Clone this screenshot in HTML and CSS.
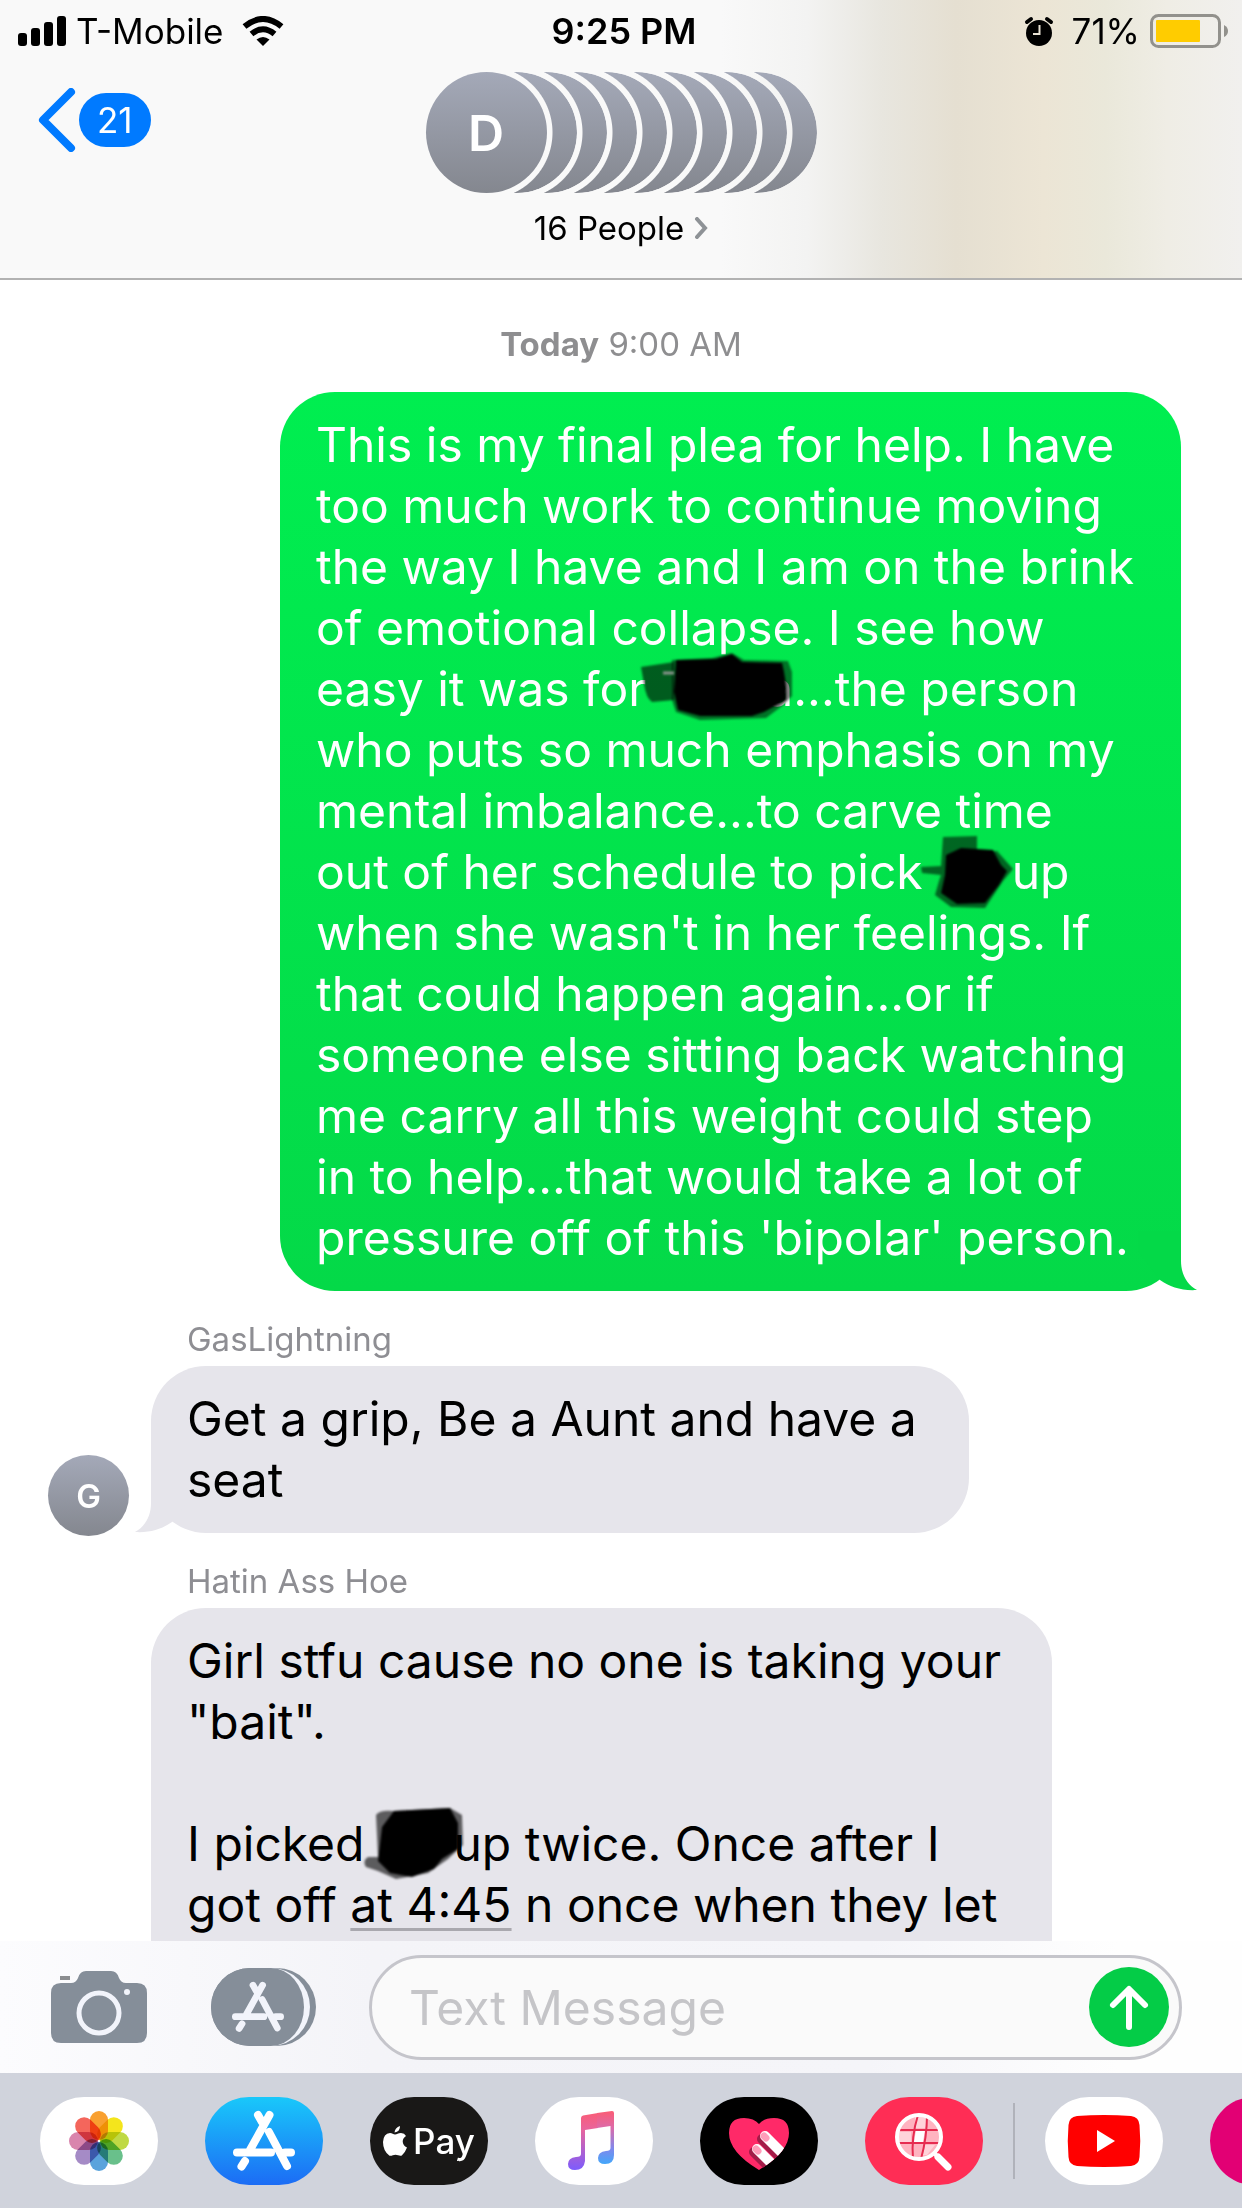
FILE: index.html
```html
<!DOCTYPE html>
<html lang="en">
<head>
    <meta charset="UTF-8">
    <meta name="viewport" content="width=device-width, initial-scale=1.0">
    <title>Messages</title>
    <link rel="stylesheet" href="styles.css">
</head>
<body>

    <!-- Shared shapes -->
    <svg class="defs" aria-hidden="true">
        <symbol id="store-mark" viewBox="28 12 64 62">
            <g fill="none" stroke="currentColor" stroke-width="8" stroke-linecap="round">
                <path d="M65.500 17L46 52M54 17L58 24M33 54.500H67M81 54.500H87M41 63L37.500 68.500M65 34L83 68"/>
            </g>
        </symbol>
        <symbol id="tail" viewBox="0 0 60 60">
            <path d="M17 0V30C17 42 12 53 1 59C16 60 28 56 38 49L60 20V0Z" fill="currentColor"/>
        </symbol>
    </svg>

    <!-- Header -->
    <header class="header">
        <div class="status">
            <div class="status-left">
                <svg class="signal" viewBox="0 0 48 30" aria-hidden="true">
                    <rect x="0" y="17" width="9" height="13" rx="3"/>
                    <rect x="13" y="12" width="9" height="18" rx="3"/>
                    <rect x="26" y="6" width="9" height="24" rx="3"/>
                    <rect x="39" y="0" width="9" height="30" rx="3"/>
                </svg>
                <span>T-Mobile</span>
                <svg class="wifi" viewBox="0 0 42 30" aria-hidden="true">
                    <path d="M21 30L14.500 23.500Q21 18.500 27.500 23.500Z"/>
                    <path d="M9.500 18Q21 8.500 32.500 18M2.500 10.500Q21 -4.500 39.500 10.500" fill="none" stroke="#000" stroke-width="6"/>
                </svg>
            </div>
            <strong class="clock">9:25 PM</strong>
            <div class="status-right">
                <svg class="alarm" viewBox="0 0 30 30" aria-hidden="true">
                    <circle cx="15" cy="17" r="13"/>
                    <path d="M3 6L7 3M27 6L23 3" stroke="#000" stroke-width="4" stroke-linecap="round"/>
                    <path d="M15.500 9V18H9" fill="none" stroke="#e8e2d4" stroke-width="2"/>
                </svg>
                <span>71%</span>
                <svg class="battery" viewBox="0 0 80 34" aria-hidden="true">
                    <rect x="1.500" y="1.500" width="68" height="31" rx="7" fill="none" stroke="#92918c" stroke-width="3"/>
                    <rect x="6" y="6" width="44" height="22" rx="1" fill="#ffcc00"/>
                    <path d="M74 11Q78 13 78 17T74 23Z" fill="#92918c"/>
                </svg>
            </div>
        </div>
        <div class="nav">
            <button class="back" aria-label="Back, 21 unread">
                <svg class="back-arrow" viewBox="0 0 40 64" aria-hidden="true">
                    <path d="M33 4L5 32L33 60" fill="none" stroke="#007aff" stroke-width="8" stroke-linecap="round" stroke-linejoin="round"/>
                </svg>
                <span class="unread">21</span>
            </button>
            <button class="group">
                <span class="faces">
                    <span class="face">D</span>
                    <span class="face"></span>
                    <span class="face"></span>
                    <span class="face"></span>
                    <span class="face"></span>
                    <span class="face"></span>
                    <span class="face"></span>
                    <span class="face"></span>
                    <span class="face"></span>
                    <span class="face"></span>
                </span>
                <span class="people">16 People
                    <svg class="more" viewBox="0 0 14 22" aria-hidden="true">
                        <path d="M3 2L11 11L3 20" fill="none" stroke="#8e9296" stroke-width="4" stroke-linecap="round"/>
                    </svg>
                </span>
            </button>
        </div>
    </header>

    <!-- Conversation -->
    <main class="thread">
        <p class="date"><b>Today</b> 9:00 AM</p>

        <div class="bubble sent">
            This is my final plea for help. I have too much work to continue moving the way I have and I am on the brink of emotional collapse. I see how easy it was for<span class="redact redact-long">
                <svg class="scribble scribble-long" viewBox="0 0 156 68" aria-hidden="true">
                    <path d="M1 15L34 10V48L12 50Q6 46 4 32Z" opacity=".6"/>
                    <path d="M32 8L72 6L92 1L104 8L148 9L152 20L152 44L142 54L126 66L60 68L36 60L32 48Z" opacity=".5"/>
                    <path d="M36 8L76 7L92 2L102 10L142 11Q147 30 146 48L124 60L112 64L60 64L38 58L34 40Z"/>
                    <path d="M23 21H34" stroke="#8b938d" stroke-width="3"/>
                </svg></span>a...the person who puts so much emphasis on my mental imbalance...to carve time<br>
            out of her schedule to pick<span class="redact redact-short">
                <svg class="scribble scribble-short" viewBox="0 0 96 74" aria-hidden="true">
                    <path d="M24 2L58 1V18L78 16L94 34L84 46L66 73L32 72L16 60L20 46L22 40L3 38L2 32L22 31Z" opacity=".55"/>
                    <path d="M27 20L42 13L74 15L82 30L88 36L80 50L66 68L38 69L22 58L26 40Z"/>
                </svg></span>up when she wasn't in her feelings. If that could happen again...or if someone else sitting back watching me carry all this weight could step in to help...that would take a lot of pressure off of this 'bipolar' person.
            <svg class="tail tail-right" aria-hidden="true"><use href="#tail"/></svg>
        </div>

        <p class="sender">GasLightning</p>
        <div class="row">
            <span class="face face-small">G</span>
            <div class="bubble received bubble-narrow">
                Get a grip, Be a Aunt and have a seat
                <svg class="tail tail-left" aria-hidden="true"><use href="#tail"/></svg>
            </div>
        </div>

        <p class="sender">Hatin Ass Hoe</p>
        <div class="row">
            <div class="bubble received bubble-open">
                Girl stfu cause no one is taking your "bait".<br><br>
                I picked<span class="redact redact-short">
                    <svg class="scribble scribble-dark" viewBox="0 0 100 74" aria-hidden="true">
                        <path d="M12 8Q16 3 28 4L86 1L98 8L99 38L84 52L64 66L32 72L14 64L2 60Q-2 54 4 50L14 50Z" opacity=".6"/>
                        <path d="M30 4L86 1L94 16L94 42L78 52L70 62L48 70L26 66L14 54L18 20Z"/>
                    </svg></span>up twice. Once after I got off <a class="time-link" href="#">at 4:45</a> n once when they let
            </div>
        </div>
    </main>

    <!-- Message box -->
    <form class="composer">
        <button class="icon-button" type="button" aria-label="Camera">
            <svg class="camera" viewBox="0 0 96 72" aria-hidden="true">
                <path d="M10 12H20Q25 12 27 7Q29 0 35 0H60Q66 0 68 7Q70 12 75 12H86Q96 12 96 22V62Q96 72 86 72H10Q0 72 0 62V22Q0 12 10 12Z" fill="#858e99"/>
                <rect x="9" y="5" width="10" height="4" fill="#8b8d90"/>
                <circle cx="48" cy="42" r="20" fill="none" stroke="#f2f4fb" stroke-width="5"/>
                <circle cx="76" cy="21" r="3" fill="#f2f4fb"/>
            </svg>
        </button>
        <button class="icon-button apps" type="button" aria-label="Apps">
            <span class="apps-disc"><svg class="apps-mark" aria-hidden="true"><use href="#store-mark"/></svg></span>
        </button>
        <div class="field">
            <input class="text-input" type="text" aria-label="Text Message" placeholder="Text Message">
            <button class="send" type="button" aria-label="Send">
                <svg class="send-arrow" viewBox="0 0 80 80" aria-hidden="true">
                    <path d="M40 60V23M24 38L40 22L56 38" fill="none" stroke="#fff" stroke-width="6" stroke-linecap="round" stroke-linejoin="round"/>
                </svg>
            </button>
        </div>
    </form>

    <!-- App drawer -->
    <nav class="drawer">
        <button class="app app-white" aria-label="Photos">
            <svg viewBox="0 0 118 88" aria-hidden="true">
                <g class="petals" transform="translate(59 44)">
                    <rect x="-9" y="-30" width="18" height="29" rx="9" fill="#f9a030"/>
                    <rect x="-9" y="-30" width="18" height="29" rx="9" fill="#f4e51c" transform="rotate(45)"/>
                    <rect x="-9" y="-30" width="18" height="29" rx="9" fill="#bfd944" transform="rotate(90)"/>
                    <rect x="-9" y="-30" width="18" height="29" rx="9" fill="#69c08b" transform="rotate(135)"/>
                    <rect x="-9" y="-30" width="18" height="29" rx="9" fill="#5aa3dc" transform="rotate(180)"/>
                    <rect x="-9" y="-30" width="18" height="29" rx="9" fill="#a58bc6" transform="rotate(225)"/>
                    <rect x="-9" y="-30" width="18" height="29" rx="9" fill="#d985ad" transform="rotate(270)"/>
                    <rect x="-9" y="-30" width="18" height="29" rx="9" fill="#f4665c" transform="rotate(315)"/>
                </g>
            </svg>
        </button>
        <button class="app app-store" aria-label="App Store">
            <svg class="store-icon" aria-hidden="true"><use href="#store-mark"/></svg>
        </button>
        <button class="app app-pay" aria-label="Apple Pay">
            <svg class="apple" viewBox="0 0 24 30" aria-hidden="true">
                <path d="M12 8.500C14 8.500 15 7 18 7Q21.500 7.200 23 10C18 13 19 19.500 24 21.500Q22 27 18.800 29.500C16.500 30.300 15 28.800 12.500 28.800C10 28.800 8.500 30.300 6.500 29.700Q0 25 0 16Q.5 7.500 7 7C9 7 10.500 8.500 12 8.500Z" fill="#fff"/>
                <path d="M11.500 6.500Q12 1.500 17 0Q17.200 5.500 11.500 6.500Z" fill="#fff"/>
            </svg>
            <span>Pay</span>
        </button>
        <button class="app app-white" aria-label="Music">
            <svg viewBox="0 0 118 88" aria-hidden="true">
                <defs>
                    <linearGradient id="note-left" x1="0" y1="14" x2="0" y2="74" gradientUnits="userSpaceOnUse">
                        <stop offset="0" stop-color="#fb5c74"/><stop offset=".3" stop-color="#e9659c"/><stop offset="1" stop-color="#7a5cff"/>
                    </linearGradient>
                    <linearGradient id="note-right" x1="0" y1="14" x2="0" y2="68" gradientUnits="userSpaceOnUse">
                        <stop offset="0" stop-color="#fb5c74"/><stop offset=".3" stop-color="#dd6aa8"/><stop offset=".7" stop-color="#7f88ec"/><stop offset="1" stop-color="#3fa9fb"/>
                    </linearGradient>
                </defs>
                <path d="M46 21Q46 19 48 18.500L63 16V31L50 33V64Q49 73 40 73Q33 73 33 67T41 60Q46 60 46 57Z" fill="url(#note-left)"/>
                <path d="M62 16L77 14Q79 14 79 16V58Q79 67 70 67Q63 67 63 61T71 54Q75.500 54 75.500 51V29L62 31Z" fill="url(#note-right)"/>
            </svg>
        </button>
        <button class="app app-touch" aria-label="Digital Touch">
            <svg viewBox="0 0 118 88" aria-hidden="true">
                <clipPath id="heart"><path d="M59 73Q29 55 29 36Q29 21 44 21Q54 21 59 27Q64 21 74 21Q89 21 89 36Q89 55 59 73Z"/></clipPath>
                <g clip-path="url(#heart)">
                    <rect x="20" y="15" width="80" height="65" fill="#ff2968"/>
                    <path d="M62 42L84 64M54 55L74 75" stroke="#a31c48" stroke-width="10" stroke-linecap="round"/>
                    <path d="M65 39L88 62M57 52L80 75" stroke="#fff" stroke-width="10" stroke-linecap="round"/>
                    <path d="M64 39L66 41M56 52L58 54" stroke="#ff9dba" stroke-width="7" stroke-linecap="round"/>
                </g>
            </svg>
        </button>
        <button class="app app-search" aria-label="Images">
            <svg viewBox="0 0 118 88" aria-hidden="true">
                <circle cx="54" cy="40" r="22" fill="#ffb3c0"/>
                <path d="M51 33H60L58 45H49Z" fill="#fff"/>
                <path d="M50 20H62L60 31H50ZM60 48H70L62 58H58ZM34 35H46V45H34Z" fill="#ffd3da"/>
                <path d="M32 33H76M32 46H76M53 18Q46 40 48 62M62 18Q62 40 56 62" fill="none" stroke="#e62c50" stroke-width="2"/>
                <circle cx="54" cy="40" r="22" fill="none" stroke="#fff" stroke-width="4"/>
                <path d="M69 56L73 60" stroke="#fff" stroke-width="4"/>
                <path d="M73 60L83 70" stroke="#fff" stroke-width="7" stroke-linecap="round"/>
            </svg>
        </button>
        <span class="divider"></span>
        <button class="app app-white" aria-label="YouTube">
            <svg viewBox="0 0 118 88" aria-hidden="true">
                <path d="M32 19Q59 17 86 19Q94 20 94.500 28Q96 44 94.500 60Q94 68 86 69Q59 71 32 69Q24 68 23.500 60Q22 44 23.500 28Q24 20 32 19Z" fill="#f00"/>
                <path d="M52 33L70 44L52 55Z" fill="#fff"/>
            </svg>
        </button>
        <button class="app app-pink" aria-label="More apps"></button>
    </nav>

</body>
</html>
```

FILE: styles.css
```css
/* Global Styles */
* {
    box-sizing: border-box;
}

body {
    margin: 0;
    height: 100vh;
    display: flex;
    flex-direction: column;
    overflow: hidden;
    font-family: Inter, 'Liberation Sans', sans-serif;
    font-size: 33px;
    line-height: 40px;
    color: #000;
    background: #fff;
}

button {
    padding: 0;
    border: none;
    background: none;
    font: inherit;
    color: inherit;
    cursor: pointer;
}

p {
    margin: 0;
}

svg {
    display: block;
    flex: none;
}

.defs {
    position: absolute;
    width: 0;
    height: 0;
}

/* Header */
.header {
    flex: none;
    padding-bottom: 30px;
    border-bottom: 2px solid #b2b2b2;
    background: linear-gradient(90deg, #f9f9f9 58%, #f3f3f2 65%, #e8e6df 71%, #e5dfd1 77%, #ece5d5 84%, #eae8da 89%, #efede5 94%, #f1f0ee 100%);
}

.status {
    display: grid;
    grid-template-columns: 1fr auto 1fr;
    align-items: center;
    height: 62px;
    padding: 0 12px 0 18px;
    font-size: 35px;
}

.status-left,
.status-right {
    display: flex;
    align-items: center;
    gap: 10px;
}

.status-right {
    justify-content: flex-end;
}

.clock {
    font-size: 36px;
    font-weight: 600;
}

.signal {
    width: 48px;
    height: 30px;
}

.wifi {
    width: 42px;
    height: 30px;
    margin-left: 8px;
}

.alarm {
    width: 30px;
    height: 30px;
    margin-right: 8px;
}

.battery {
    width: 80px;
    height: 34px;
}

.nav {
    display: grid;
    grid-template-columns: 1fr auto 1fr;
    align-items: start;
    padding: 10px 38px 0;
}

.back {
    display: flex;
    align-items: center;
    gap: 1px;
    margin-top: 16px;
}

.back-arrow {
    width: 40px;
    height: 64px;
}

.unread {
    padding: 7px 18px;
    border-radius: 27px;
    font-size: 35px;
    color: #fff;
    background: #007aff;
}

.group {
    display: flex;
    flex-direction: column;
    align-items: center;
}

.faces {
    display: flex;
}

.face {
    display: flex;
    align-items: center;
    justify-content: center;
    flex: none;
    width: 121px;
    height: 121px;
    border-radius: 50%;
    font-size: 50px;
    font-weight: 600;
    color: #fff;
    background: linear-gradient(#a4a9b8, #84878f);
}

/* Cut each face away where the one to its left lies */
.face + .face {
    margin-left: -91px;
    mask-image: radial-gradient(circle at 30px 50%, transparent 66px, #000 67px);
}

.people {
    display: flex;
    align-items: center;
    gap: 10px;
    margin-top: 15px;
}

.more {
    width: 14px;
    height: 22px;
}

/* Conversation */
.thread {
    flex: 1;
    min-height: 0;
    overflow: hidden;
    display: flex;
    flex-direction: column;
    padding-top: 44px;
}

.date {
    margin-bottom: 28px;
    text-align: center;
    color: #8e8e90;
}

.sender {
    margin: 28px 0 7px 187px;
    color: #8e8e93;
}

.row {
    display: flex;
    align-items: flex-end;
    padding-left: 151px;
}

.bubble {
    position: relative;
    isolation: isolate;
    flex: none;
    width: 901px;
    max-width: 100%;
    padding: 22px 36px 23px;
    border-radius: 55px;
    font-size: 48px;
    line-height: 61px;
}

.bubble-narrow {
    width: 818px;
}

/* Runs on below the message box */
.bubble-open {
    border-radius: 55px 55px 0 0;
}

.sent {
    align-self: flex-end;
    margin-right: 61px;
    color: #fff;
    background: linear-gradient(#00ee50, #04d948);
}

.received {
    background: #e6e5eb;
}

.face-small {
    width: 81px;
    height: 81px;
    margin: 0 22px -3px -103px;
    font-size: 33px;
}

/* Tails sit between the bubble and its text */
.tail {
    position: absolute;
    z-index: -1;
    bottom: 0;
    width: 60px;
    height: 60px;
}

.tail-left {
    left: -17px;
    color: #e6e5eb;
}

.tail-right {
    right: -17px;
    color: #04d948;
    transform: scaleX(-1);
}

.time-link {
    color: inherit;
    text-decoration: underline;
    text-decoration-color: #a9a8ae;
    text-decoration-thickness: 3px;
    text-underline-offset: 6px;
}

/* Blacked out names */
.redact {
    position: relative;
    display: inline-block;
}

.redact-long {
    width: 120px;
}

.redact-short {
    width: 89px;
}

.scribble {
    position: absolute;
    bottom: -20px;
    filter: blur(1px);
}

.scribble-long {
    bottom: -14px;
    left: -6px;
    width: 156px;
    height: 68px;
}

.scribble-short {
    left: -4px;
    width: 96px;
    height: 74px;
}

.scribble-dark {
    left: 0;
    width: 100px;
    height: 74px;
}

/* Message box */
.composer {
    flex: none;
    display: flex;
    align-items: center;
    height: 132px;
    padding: 0 60px 0 51px;
    background: linear-gradient(90deg, #fcfcfe, #f4f4f8 30%, #f5f5f9 70%, #fefefe 90%);
}

.icon-button {
    flex: none;
}

.camera {
    width: 96px;
    height: 72px;
}

.apps {
    width: 105px;
    height: 78px;
    margin: 0 53px 0 64px;
    border-radius: 39px;
    background: #858e99;
}

.apps-disc {
    display: flex;
    align-items: center;
    justify-content: center;
    width: 99px;
    height: 78px;
    border-right: 6px solid #f2f4fb;
    border-radius: 39px;
    background: #858e99;
}

.apps-mark {
    width: 54px;
    height: 52px;
    color: #f2f4fb;
}

.field {
    flex: 1;
    min-width: 0;
    display: flex;
    align-items: center;
    height: 105px;
    padding: 0 10px 0 37px;
    border: 3px solid #c5c5cb;
    border-radius: 53px;
    background: #fafafa;
}

.text-input {
    flex: 1;
    min-width: 0;
    padding: 0;
    border: none;
    outline: none;
    font: inherit;
    font-size: 48px;
    line-height: 61px;
    background: none;
}

.text-input::placeholder {
    color: #c5c5c8;
}

.send {
    flex: none;
    width: 80px;
    height: 80px;
    border-radius: 50%;
    background: #04cc47;
}

.send-arrow {
    width: 80px;
    height: 80px;
}

/* App drawer */
.drawer {
    flex: none;
    display: flex;
    align-items: center;
    gap: 47px;
    height: 135px;
    padding-left: 40px;
    overflow: hidden;
    background: #d0d3dc;
}

.app {
    flex: none;
    display: flex;
    align-items: center;
    justify-content: center;
    gap: 6px;
    width: 118px;
    height: 88px;
    border-radius: 44px;
}

.app-white {
    background: #fff;
}

.app-store {
    color: #fff;
    background: linear-gradient(#19c8fa, #1c6cf5);
}

.store-icon {
    width: 64px;
    height: 62px;
}

.app-pay {
    font-size: 35px;
    font-weight: 500;
    color: #fff;
    background: #191817;
}

.apple {
    width: 24px;
    height: 30px;
}

.app-touch {
    background: #000;
}

.app-search {
    background: #ff2d55;
}

.app-pink {
    background: #e20074;
}

.petals rect {
    mix-blend-mode: multiply;
}

.divider {
    flex: none;
    width: 2px;
    height: 76px;
    margin: 0 -17px;
    background: #b0b2ba;
}
```
